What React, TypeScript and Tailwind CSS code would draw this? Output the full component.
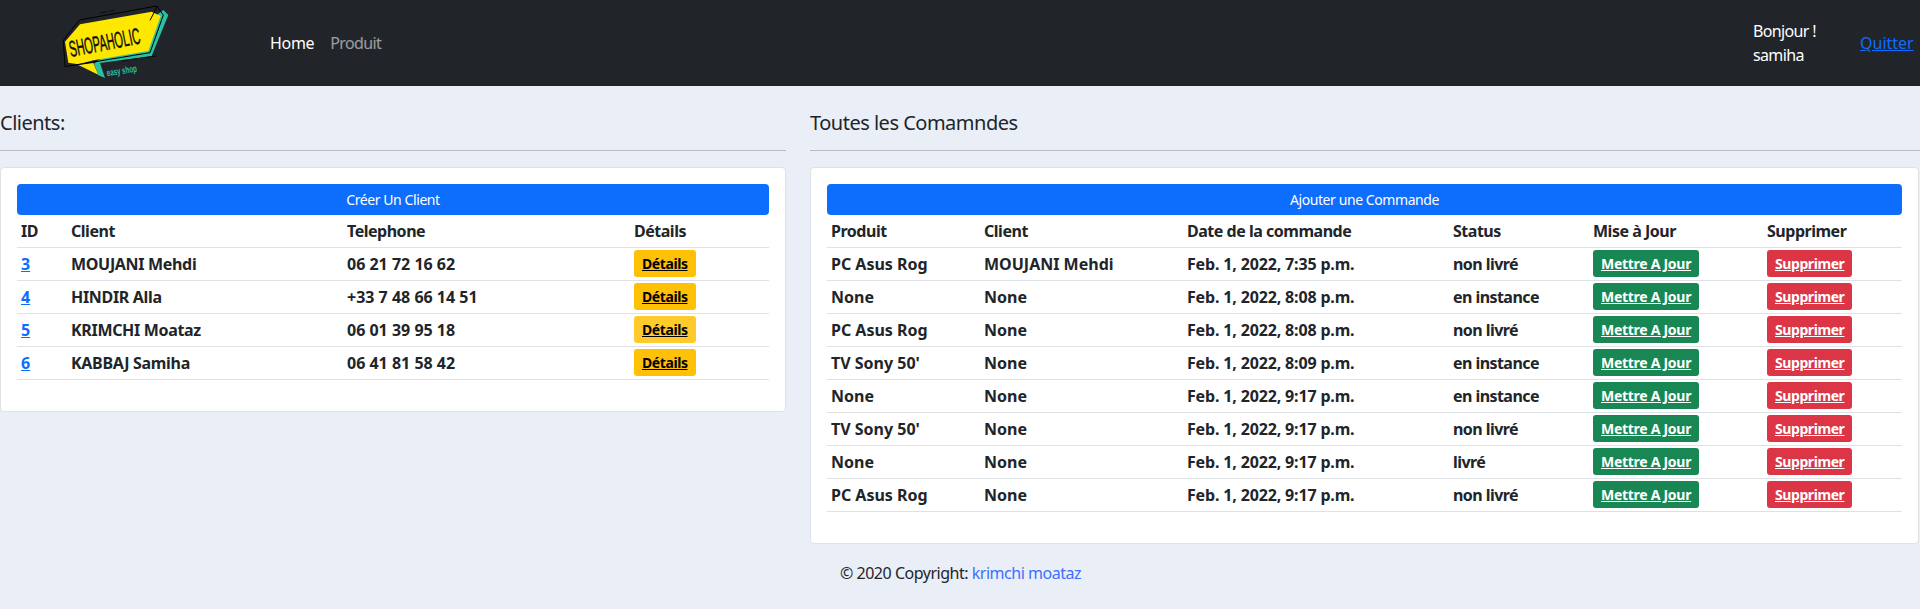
const font = "font-['Noto_Sans','Open_Sans',sans-serif]";

const clients = [
  { id: 3, name: "MOUJANI Mehdi", phone: "06 21 72 16 62" },
  { id: 4, name: "HINDIR Alla", phone: "+33 7 48 66 14 51" },
  { id: 5, name: "KRIMCHI Moataz", phone: "06 01 39 95 18", hover: true },
  { id: 6, name: "KABBAJ Samiha", phone: "06 41 81 58 42" },
];

const orders = [
  { product: "PC Asus Rog", client: "MOUJANI Mehdi", date: "Feb. 1, 2022, 7:35 p.m.", status: "non livré" },
  { product: "None", client: "None", date: "Feb. 1, 2022, 8:08 p.m.", status: "en instance" },
  { product: "PC Asus Rog", client: "None", date: "Feb. 1, 2022, 8:08 p.m.", status: "non livré" },
  { product: "TV Sony 50'", client: "None", date: "Feb. 1, 2022, 8:09 p.m.", status: "en instance" },
  { product: "None", client: "None", date: "Feb. 1, 2022, 9:17 p.m.", status: "en instance" },
  { product: "TV Sony 50'", client: "None", date: "Feb. 1, 2022, 9:17 p.m.", status: "non livré" },
  { product: "None", client: "None", date: "Feb. 1, 2022, 9:17 p.m.", status: "livré" },
  { product: "PC Asus Rog", client: "None", date: "Feb. 1, 2022, 9:17 p.m.", status: "non livré" },
];

function Logo() {
  return (
    <svg viewBox="0 0 390 255" className="w-[130px] h-[85px] shrink-0 overflow-visible">
      <polygon points="340,27 355,42 305,165 150,186 165,231 145,222 132,188" fill="#2bbfa4" />
      <polygon points="45,122 90,70 305,32 332,45 295,150 130,178 85,190 55,185" fill="#ffe800" />
      <polygon points="85,192 130,186 145,222 165,231" fill="#ffe800" />
      <polyline points="40,118 88,57 320,15 340,42 300,155 45,197 40,118" fill="none" stroke="#000" strokeWidth="3" />
      <polyline points="300,58 322,16" fill="none" stroke="#000" strokeWidth="3" />
      <path d="M150 36 L172 32 M178 31 L195 28 M215 180 L262 173 M272 171 L320 165" stroke="#000" strokeWidth="2" />
      <g transform="translate(62 168) rotate(-11) scale(0.49 1)">
        <text fontFamily="Liberation Sans" fontSize="68" fill="#111" stroke="#111" strokeWidth="1.5">SHOPAHOLIC</text>
      </g>
      <g transform="translate(172 226) rotate(-9) scale(0.62 1)">
        <text fontFamily="Liberation Sans" fontWeight="bold" fontSize="30" fill="#2bbfa4">easy shop</text>
      </g>
    </svg>
  );
}

function ActionLink({ label, className }: { label: string; className: string }) {
  return (
    <a href="#" className={`inline-block h-[27px] px-2 rounded-[3px] text-sm font-bold leading-[27px] underline ${className}`}>
      {label}
    </a>
  );
}

function Th({ children }: { children: React.ReactNode }) {
  return <th className="h-[32px] px-1 text-left font-bold align-middle tracking-[-0.03em]">{children}</th>;
}

function Td({ children, className = "" }: { children: React.ReactNode; className?: string }) {
  return <td className={`h-[33px] px-1 font-bold align-middle whitespace-nowrap ${className}`}>{children}</td>;
}

export default function App() {
  return (
    <div className={`min-h-screen bg-[#eaeef6] text-[#212529] ${font} text-base`}>
      <nav className="h-[86px] bg-[#212529] flex items-center">
        <div className="pl-[50px] w-[262px]">
          <Logo />
        </div>
        <a href="#" className="px-2 text-white tracking-[-0.02em]">Home</a>
        <a href="#" className="px-2 text-white/55 tracking-[-0.04em]">Produit</a>
        <div className="ml-auto text-white leading-6 w-[107px] tracking-[-0.04em]">
          <div>Bonjour !</div>
          <div>samiha</div>
        </div>
        <a href="#" className="mr-[10px] w-[50px] text-[#0d6efd] underline">Quitter</a>
      </nav>

      <div className="flex gap-6">
        <section className="w-[786px] shrink-0">
          <h5 className="mt-[25px] h-6 text-xl leading-6 tracking-[-0.025em]">Clients:</h5>
          <hr className="mt-[15px] mb-[16px] border-t border-[#b9bcc2]" />
          <div className="bg-white border border-[#dfe1e6] rounded p-4 h-[245px]">
            <a href="#" className="block h-[31px] rounded bg-[#0d6efd] text-white text-sm leading-[31px] text-center tracking-[-0.03em]">Créer Un Client</a>
            <table className="w-full table-fixed">
              <colgroup>
                <col className="w-[50px]" />
                <col className="w-[276px]" />
                <col className="w-[287px]" />
                <col />
              </colgroup>
              <thead>
                <tr className="border-b border-[#dee2e6]">
                  <Th>ID</Th>
                  <Th>Client</Th>
                  <Th>Telephone</Th>
                  <Th>Détails</Th>
                </tr>
              </thead>
              <tbody>
                {clients.map((c) => (
                  <tr key={c.id} className="border-b border-[#dee2e6]">
                    <Td><a href="#" className="text-[#0d6efd] underline">{c.id}</a></Td>
                    <Td className="tracking-[-0.02em]">{c.name}</Td>
                    <Td>{c.phone}</Td>
                    <Td>
                      <ActionLink label="Détails" className={c.hover ? "bg-[#ffca2c] text-black tracking-[-0.03em]" : "bg-[#ffc107] text-black tracking-[-0.03em]"} />
                    </Td>
                  </tr>
                ))}
              </tbody>
            </table>
          </div>
        </section>

        <section className="flex-1 min-w-0">
          <h5 className="mt-[25px] h-6 text-xl leading-6 tracking-[-0.025em]">Toutes les Comamndes</h5>
          <hr className="mt-[15px] mb-[16px] border-t border-[#b9bcc2]" />
          <div className="mr-px bg-white border border-[#dfe1e6] rounded p-4 h-[377px]">
            <a href="#" className="block h-[31px] rounded bg-[#0d6efd] text-white text-sm leading-[31px] text-center tracking-[-0.03em]">Ajouter une Commande</a>
            <table className="w-full table-fixed">
              <colgroup>
                <col className="w-[153px]" />
                <col className="w-[203px]" />
                <col className="w-[266px]" />
                <col className="w-[140px]" />
                <col className="w-[174px]" />
                <col />
              </colgroup>
              <thead>
                <tr className="border-b border-[#dee2e6]">
                  <Th>Produit</Th>
                  <Th>Client</Th>
                  <Th>Date de la commande</Th>
                  <Th>Status</Th>
                  <Th>Mise à Jour</Th>
                  <Th>Supprimer</Th>
                </tr>
              </thead>
              <tbody>
                {orders.map((o, i) => (
                  <tr key={i} className="border-b border-[#dee2e6]">
                    <Td>{o.product}</Td>
                    <Td>{o.client}</Td>
                    <Td className="tracking-[-0.01em]">{o.date}</Td>
                    <Td className="tracking-[-0.035em]">{o.status}</Td>
                    <Td><ActionLink label="Mettre A Jour" className="bg-[#198754] text-white tracking-[-0.02em]" /></Td>
                    <Td><ActionLink label="Supprimer" className="bg-[#dc3545] text-white tracking-[-0.03em]" /></Td>
                  </tr>
                ))}
              </tbody>
            </table>
          </div>
          <p className="mt-[17px] ml-[30px] leading-6 tracking-[-0.03em]">
            © 2020 Copyright: <a href="#" className="text-[#3b71fd]">krimchi moataz</a>
          </p>
        </section>
      </div>
    </div>
  );
}
